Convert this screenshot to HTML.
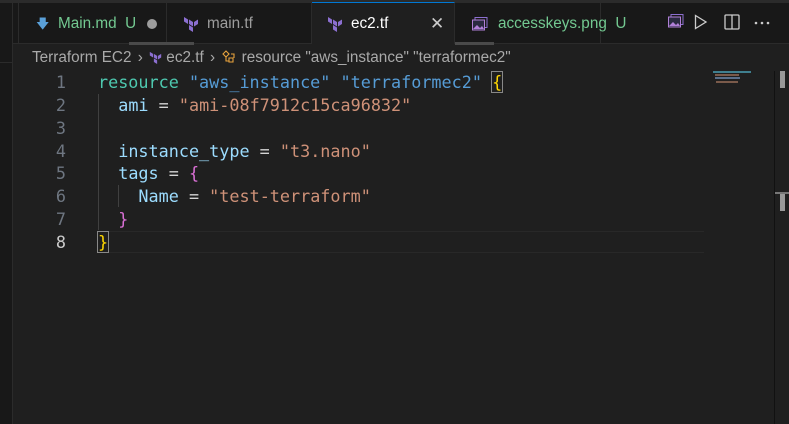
<!DOCTYPE html><html><head><style>
*{margin:0;padding:0;box-sizing:border-box}
body{width:789px;height:424px;background:#1f1f1f;overflow:hidden;position:relative;font-family:"Liberation Sans","DejaVu Sans",sans-serif}
.a{position:absolute}
.tabs{left:0;top:0;width:789px;height:44px;background:#181818;border-top:3px solid #2b2b2b;border-bottom:1px solid #2b2b2b}
.tab{position:absolute;top:3px;height:41px;border-right:1px solid #2b2b2b;font-size:15.3px;color:#9d9d9d;line-height:41px;white-space:nowrap}
.code{font-family:"DejaVu Sans Mono",monospace;font-size:16.8px;white-space:pre;line-height:22.85px}
.ln{color:#6e7681;text-align:right;width:26px;left:40px}
.k{color:#4ec9b0}.s{color:#ce9178}.b{color:#569cd6}.p{color:#9cdcfe}.w{color:#d4d4d4}.m{color:#da70d6}.y{color:#ffd700}
</style></head><body>
<div class="a tabs"></div>
<div class="a" style="left:0;top:3px;width:13px;height:421px;background:#181818;border-right:1px solid #2b2b2b"></div>
<div class="a" style="left:0;top:62px;width:12px;height:1px;background:#2b2b2b"></div>
<div class="tab" style="left:18px;width:149px;border-left:1px solid #2b2b2b"><span class="a" style="left:17px;top:0;color:#5aa0d8;font-size:13px">&#129095;</span><span class="a" style="left:39px;color:#73c991">Main.md&nbsp; U</span><span class="a" style="left:128px;top:16px;width:10px;height:10px;border-radius:50%;background:#9d9d9d"></span></div>
<div class="tab" style="left:167px;width:145px"><svg class="a" style="left:16px;top:13px" width="16" height="16" viewBox="0 0 16 16"><path d="M1 1l4 2.5v4.5L1 5.5zM6 3.5l4 2.5v4.5L6 8zM11 6l4-2.5v4.5l-4 2.5zM6 9l4 2.5V16L6 13.5z" fill="#8c6fd1"/></svg><span class="a" style="left:40px">main.tf</span></div>
<div class="tab" style="left:312px;width:143px;background:#1f1f1f;border-top:1px solid #0078d4;height:42px;top:2px;color:#fff"><svg class="a" style="left:15px;top:13px" width="16" height="16" viewBox="0 0 16 16"><path d="M1 1l4 2.5v4.5L1 5.5zM6 3.5l4 2.5v4.5L6 8zM11 6l4-2.5v4.5l-4 2.5zM6 9l4 2.5V16L6 13.5z" fill="#8c6fd1"/></svg><span class="a" style="left:39px">ec2.tf</span><span class="a" style="left:118px;font-size:17px;color:#ccc">✕</span></div>
<div class="tab" style="left:455px;width:146px"><svg class="a" style="left:17px;top:14px" width="16" height="14" viewBox="0 0 16 14"><rect x="3" y="0.5" width="12" height="10" fill="none" stroke="#8c6fd1"/><rect x="0.5" y="3" width="12" height="10" fill="#2a2a40" stroke="#b180d7"/><path d="M1 12l4-4 3 3 2-2 2 3z" fill="#b180d7"/></svg><span class="a" style="left:43px;color:#73c991">accesskeys.png&nbsp; U</span></div>
<svg class="a" style="left:668px;top:14px" width="16" height="14" viewBox="0 0 16 14"><rect x="3" y="0.5" width="12" height="10" fill="none" stroke="#8c6fd1"/><rect x="0.5" y="3" width="12" height="10" fill="#2a2a40" stroke="#b180d7"/><path d="M1 12l4-4 3 3 2-2 2 3z" fill="#b180d7"/></svg>
<svg class="a" style="left:694px;top:14px" width="14" height="16" viewBox="0 0 14 16"><path d="M1.5 1.5L12 8 1.5 14.5z" fill="none" stroke="#ccc" stroke-width="1.3"/></svg>
<svg class="a" style="left:724px;top:14px" width="16" height="16" viewBox="0 0 16 16"><rect x="1" y="1" width="14" height="14" rx="1" fill="none" stroke="#ccc" stroke-width="1.3"/><path d="M8 1v14" stroke="#ccc" stroke-width="1.3"/></svg>
<svg class="a" style="left:754px;top:21px" width="16" height="4"><circle cx="2" cy="2" r="1.3" fill="#ccc"/><circle cx="8" cy="2" r="1.3" fill="#ccc"/><circle cx="14" cy="2" r="1.3" fill="#ccc"/></svg>
<div class="a" style="left:129px;top:42px;width:65px;height:3px;background:#4a4a4a"></div>
<div class="a" style="left:455px;top:42px;width:39px;height:3px;background:#4a4a4a"></div>
<div class="a" style="left:32px;top:49px;font-size:15.3px;color:#a9a9a9;white-space:nowrap">Terraform EC2 <span style="margin:0 2px">›</span> <svg width="13" height="13" viewBox="0 0 16 16" style="vertical-align:-2px"><path d="M1 1l4 2.5v4.5L1 5.5zM6 3.5l4 2.5v4.5L6 8zM11 6l4-2.5v4.5l-4 2.5zM6 9l4 2.5V16L6 13.5z" fill="#8c6fd1"/></svg> ec2.tf <span style="margin:0 2px">›</span> <svg width="16" height="14" viewBox="0 0 14 14" style="vertical-align:-2px"><path d="M1 4l3-3 3 3-3 3zM7 8h4v4H7zM4 7v4h3M9 4h3v4" fill="none" stroke="#e8a33d" stroke-width="1.1"/></svg> resource "aws_instance" "terraformec2"</div>
<div class="a" style="left:97px;top:231px;width:607px;height:22px;border-top:1px solid #282828;border-bottom:1px solid #282828"></div>
<div class="a" style="left:98px;top:94px;width:1px;height:136px;background:#404040"></div>
<div class="a" style="left:118px;top:185px;width:1px;height:22px;background:#404040"></div>
<div class="a code ln" style="top:71px">1
2
3
4
5
6
7
<span style="color:#ccc">8</span></div>
<div class="a code" style="left:98px;top:71px"><span class="k">resource</span> <span class="b">"aws_instance"</span> <span class="b">"terraformec2"</span> <span class="y" style="outline:1px solid #888">{</span>
  <span class="p">ami</span> <span class="w">=</span> <span class="s">"ami-08f7912c15ca96832"</span>

  <span class="p">instance_type</span> <span class="w">=</span> <span class="s">"t3.nano"</span>
  <span class="p">tags</span> <span class="w">=</span> <span class="m">{</span>
    <span class="p">Name</span> <span class="w">=</span> <span class="s">"test-terraform"</span>
  <span class="m">}</span>
<span class="y" style="outline:1px solid #888">}</span></div>
<div class="a" style="left:713px;top:71px;width:38px;height:2px;background:#3f7f8f"></div>
<div class="a" style="left:715px;top:74px;width:24px;height:2px;background:#7a5a4a"></div>
<div class="a" style="left:715px;top:77px;width:25px;height:2px;background:#5a6f8a"></div>
<div class="a" style="left:716px;top:81px;width:22px;height:2px;background:#7a5a4a"></div>
<div class="a" style="left:774px;top:71px;width:1px;height:353px;background:#111"></div>
<div class="a" style="left:780px;top:71px;width:5px;height:17px;background:#999"></div>
<div class="a" style="left:775px;top:192px;width:14px;height:2px;background:#777"></div>
<div class="a" style="left:780px;top:194px;width:5px;height:17px;background:#999"></div>
</body></html>
